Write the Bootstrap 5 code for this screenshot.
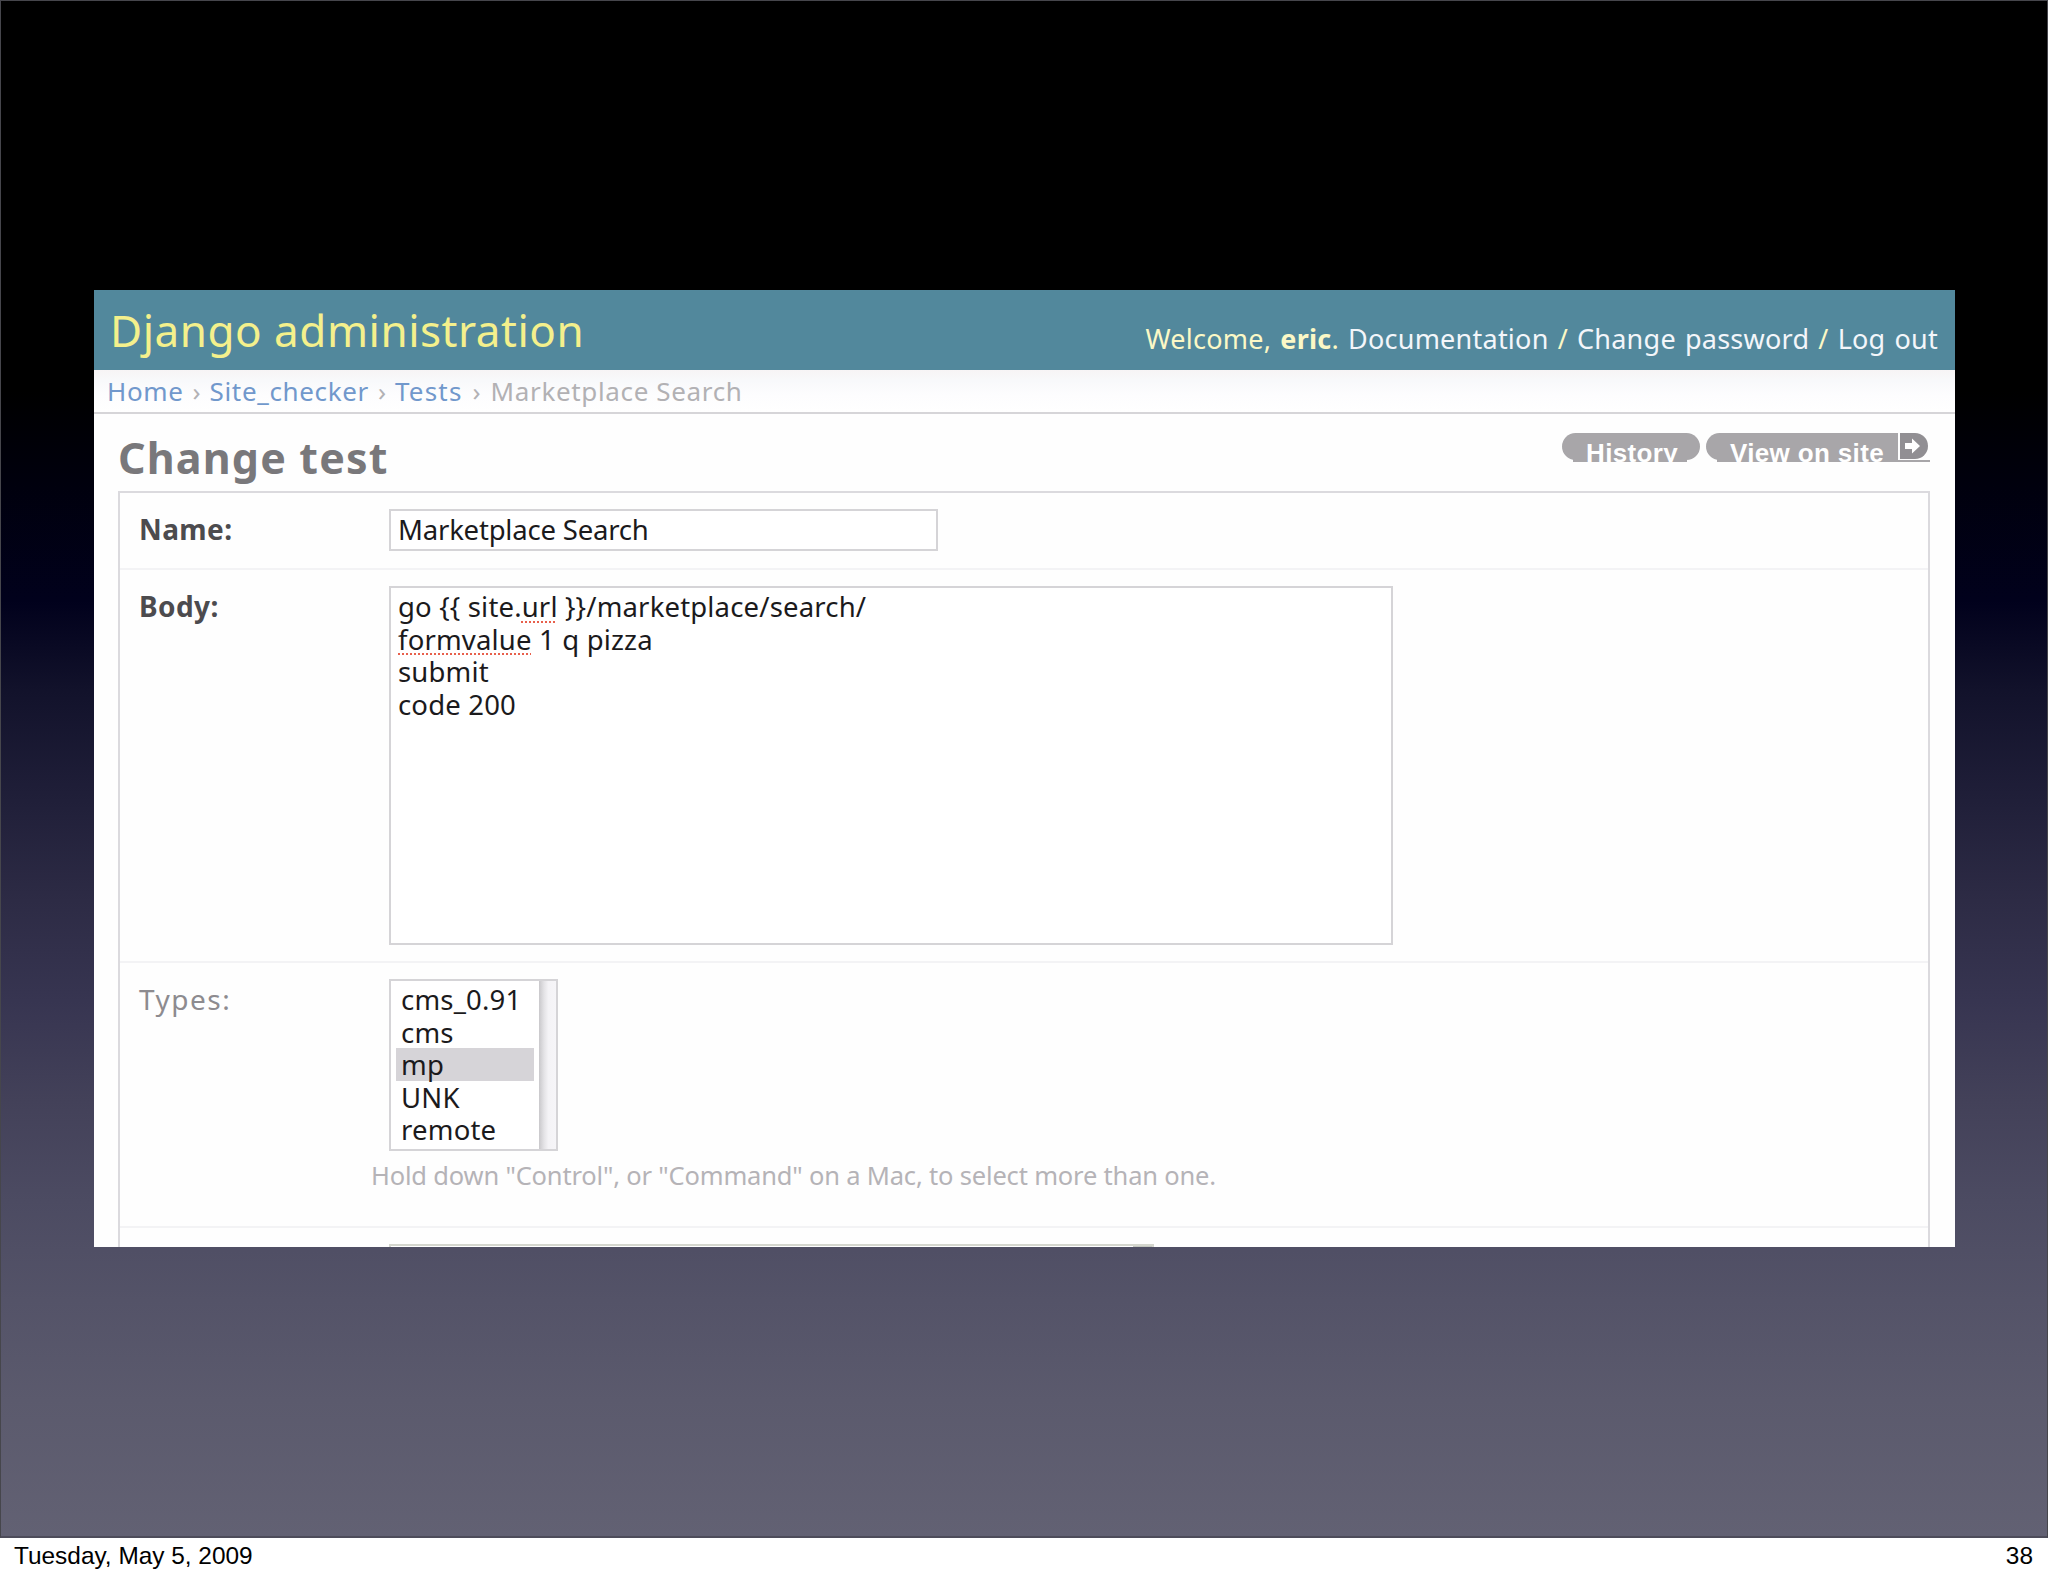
<!DOCTYPE html>
<html lang="en">
<head>
<meta charset="utf-8">
<title>Change test | Django site admin</title>
<link href="https://cdn.jsdelivr.net/npm/bootstrap@5.3.0/dist/css/bootstrap.min.css" rel="stylesheet">
<style>
html,body{height:100%}
body{font-family:"Noto Sans","Open Sans",sans-serif;background:#fff;overflow:hidden}
.slide{height:1538px;padding:289px 92px 0 93px;border:1px solid #46464c;border-bottom:2px solid #4d4c5a;
 background:linear-gradient(#000 0,#000 390px,#00000d 480px,#01011c 600px,#12122b 690px,#201f39 800px,#2d2b45 900px,#373551 1000px,#434159 1100px,#4c4b62 1200px,#545368 1300px,#5b5a6d 1400px,#626173 1535px)}
.admin{height:957px;background:#fefefe}
.topbar{height:80px;background:#52889c;padding:0 17px 0 16px}
.site-name{font-size:44px;line-height:79px;padding-top:1px;color:#f4f08c;font-weight:400;letter-spacing:.52px}
.user-tools{font-size:27px;color:#fbf8c6;padding-top:9px;line-height:79px;word-spacing:1.8px;letter-spacing:.24px}
.user-tools a{color:#f3f6fa}
.crumbs{height:44px;border-bottom:2px solid #d6d5d8;background:linear-gradient(#f7f4f5,#f8f9fb 25%,#fdfdfe 60%,#fff);font-size:26px;line-height:42px;padding-left:13px;color:#b2b1b4;letter-spacing:.65px}
.crumbs a{color:#7198cc}
.crumbs a:nth-of-type(3){letter-spacing:1.2px}
.crumbs .sep{width:26px;text-align:center;letter-spacing:0}
.crumbs .sep:nth-of-type(3){width:28px}
.headline{height:77px;padding:0 25px 0 24px}
.headline h1{font-size:43px;line-height:69px;padding-top:9px;color:#79787b;font-weight:700;letter-spacing:1.15px}
.tools{padding-top:19px;gap:6px;font:bold 26px/30px "Liberation Sans",Arial,sans-serif}
.tool{position:relative;height:29px;overflow:hidden;color:#fff;padding-top:5px;z-index:0;letter-spacing:.35px}
.tool::before{content:"";position:absolute;z-index:-1;inset:0 0 2px 0;border-radius:14px;background:#a8a6a9}
.tool::after{content:"";position:absolute;z-index:-1;inset:10px 13px 0 11px;background:#a8a6a9}
.tool.history{width:138px;padding-left:24px}
.tool.view{width:224px;padding-left:24px}
.tool.view::after{right:0;top:auto;height:2px}
.tool.view .under{position:absolute;z-index:-1;left:11px;right:31px;top:10px;bottom:0;background:#a8a6a9}
.tool.view svg{position:absolute;right:0;top:0}
.fields{height:756px;margin:0 25px 0 24px;border:2px solid #dbdade;border-bottom:0;background:#fefefe}
.line{border-bottom:2px solid #f3f3f5;padding:16px 0 0 19px}
.line label{width:250px;font-size:28px;line-height:41px;color:#4c4b4e;font-weight:700;letter-spacing:.4px}
.line.r1{height:77px}.line.r2{height:393px}.line.r3{height:265px}.line.r4{border:0}
.line .types-label{font-weight:400;color:#8d8b8f;letter-spacing:1.5px;line-height:40px}
.box{border:2px solid #d5d4d7;background:#fff;color:#1b1a1c;font-size:27.5px;line-height:32.6px}
.box.name{width:549px;height:42px;line-height:38px;padding-left:7px;letter-spacing:-.2px}
.box.text{width:1004px;height:359px;padding:3px 7px;white-space:pre;letter-spacing:.17px}
.typo{text-decoration:underline dotted #e8604c 2px;text-underline-offset:4px;text-decoration-skip-ink:none}
.box.multi{width:169px;height:172px}
.box.multi ul{padding:2px 5px;width:148px;letter-spacing:.2px}
.box.multi li{padding-left:5px;height:32.6px;line-height:33.6px}
.box.multi li.chosen{background:#d6d4d8}
.scroller{width:17px;background:linear-gradient(90deg,#c9c8cb,#e4e3e6 30%,#f4f3f6 55%,#f6f5f8)}
.helptext{font-size:25.5px;line-height:41px;color:#b5b3b7;margin:4px 0 0 -18px;letter-spacing:-.18px}
.box.next{width:765px;height:40px;border-color:#d4d6ce}
.clip{overflow:hidden}
.knob{width:19px;background:#c3c6bf}
.foot{height:38px;padding:0 15px 0 14px;font:24.4px/36px "Liberation Sans",Arial,sans-serif;color:#000}
</style>
</head>
<body>
<main class="slide">
 <div class="admin clip">
  <header class="topbar d-flex justify-content-between">
   <div class="site-name">Django administration</div>
   <div class="user-tools text-nowrap">Welcome, <strong>eric</strong>. <a class="text-decoration-none">Documentation</a> / <a class="text-decoration-none">Change password</a> / <a class="text-decoration-none">Log out</a></div>
  </header>
  <nav class="crumbs d-flex">
   <a class="text-decoration-none">Home</a><span class="sep">›</span><a class="text-decoration-none">Site_checker</a><span class="sep">›</span><a class="text-decoration-none">Tests</a><span class="sep">›</span><span>Marketplace Search</span>
  </nav>
  <div class="headline d-flex justify-content-between">
   <h1 class="m-0">Change test</h1>
   <div class="tools d-flex">
    <div class="tool history">History</div>
    <div class="tool view"><span class="under"></span>View on site
     <svg width="32" height="29" viewBox="0 0 32 29"><path d="M0 0h32v27H0z" fill="#fefefe"/><path d="M2 0h15a13 13 0 0 1 0 26H2z" fill="#918f93"/><path d="M7 10h7V5.500l8 7.500-8 7.500V16H7z" fill="#fff"/></svg>
    </div>
   </div>
  </div>
  <section class="fields">
   <div class="line r1 d-flex"><label>Name:</label><div class="box name">Marketplace Search</div></div>
   <div class="line r2 d-flex"><label>Body:</label><div class="box text">go {{ site.<span class="typo">url</span> }}/marketplace/search/
<span class="typo">formvalue</span> 1 q pizza
submit
code 200</div></div>
   <div class="line r3 d-flex"><label class="types-label">Types:</label>
    <div>
     <div class="box multi d-flex"><ul class="list-unstyled m-0"><li>cms_0.91</li><li>cms</li><li class="chosen">mp</li><li>UNK</li><li>remote</li></ul><div class="scroller"></div></div>
     <div class="helptext text-nowrap">Hold down "Control", or "Command" on a Mac, to select more than one.</div>
    </div>
   </div>
   <div class="line r4 d-flex"><label></label><div class="box next d-flex justify-content-end"><span class="knob"></span></div></div>
  </section>
 </div>
</main>
<footer class="foot d-flex justify-content-between"><span>Tuesday, May 5, 2009</span><span>38</span></footer>
<script src="https://cdn.jsdelivr.net/npm/bootstrap@5.3.0/dist/js/bootstrap.bundle.min.js"></script>
</body>
</html>
